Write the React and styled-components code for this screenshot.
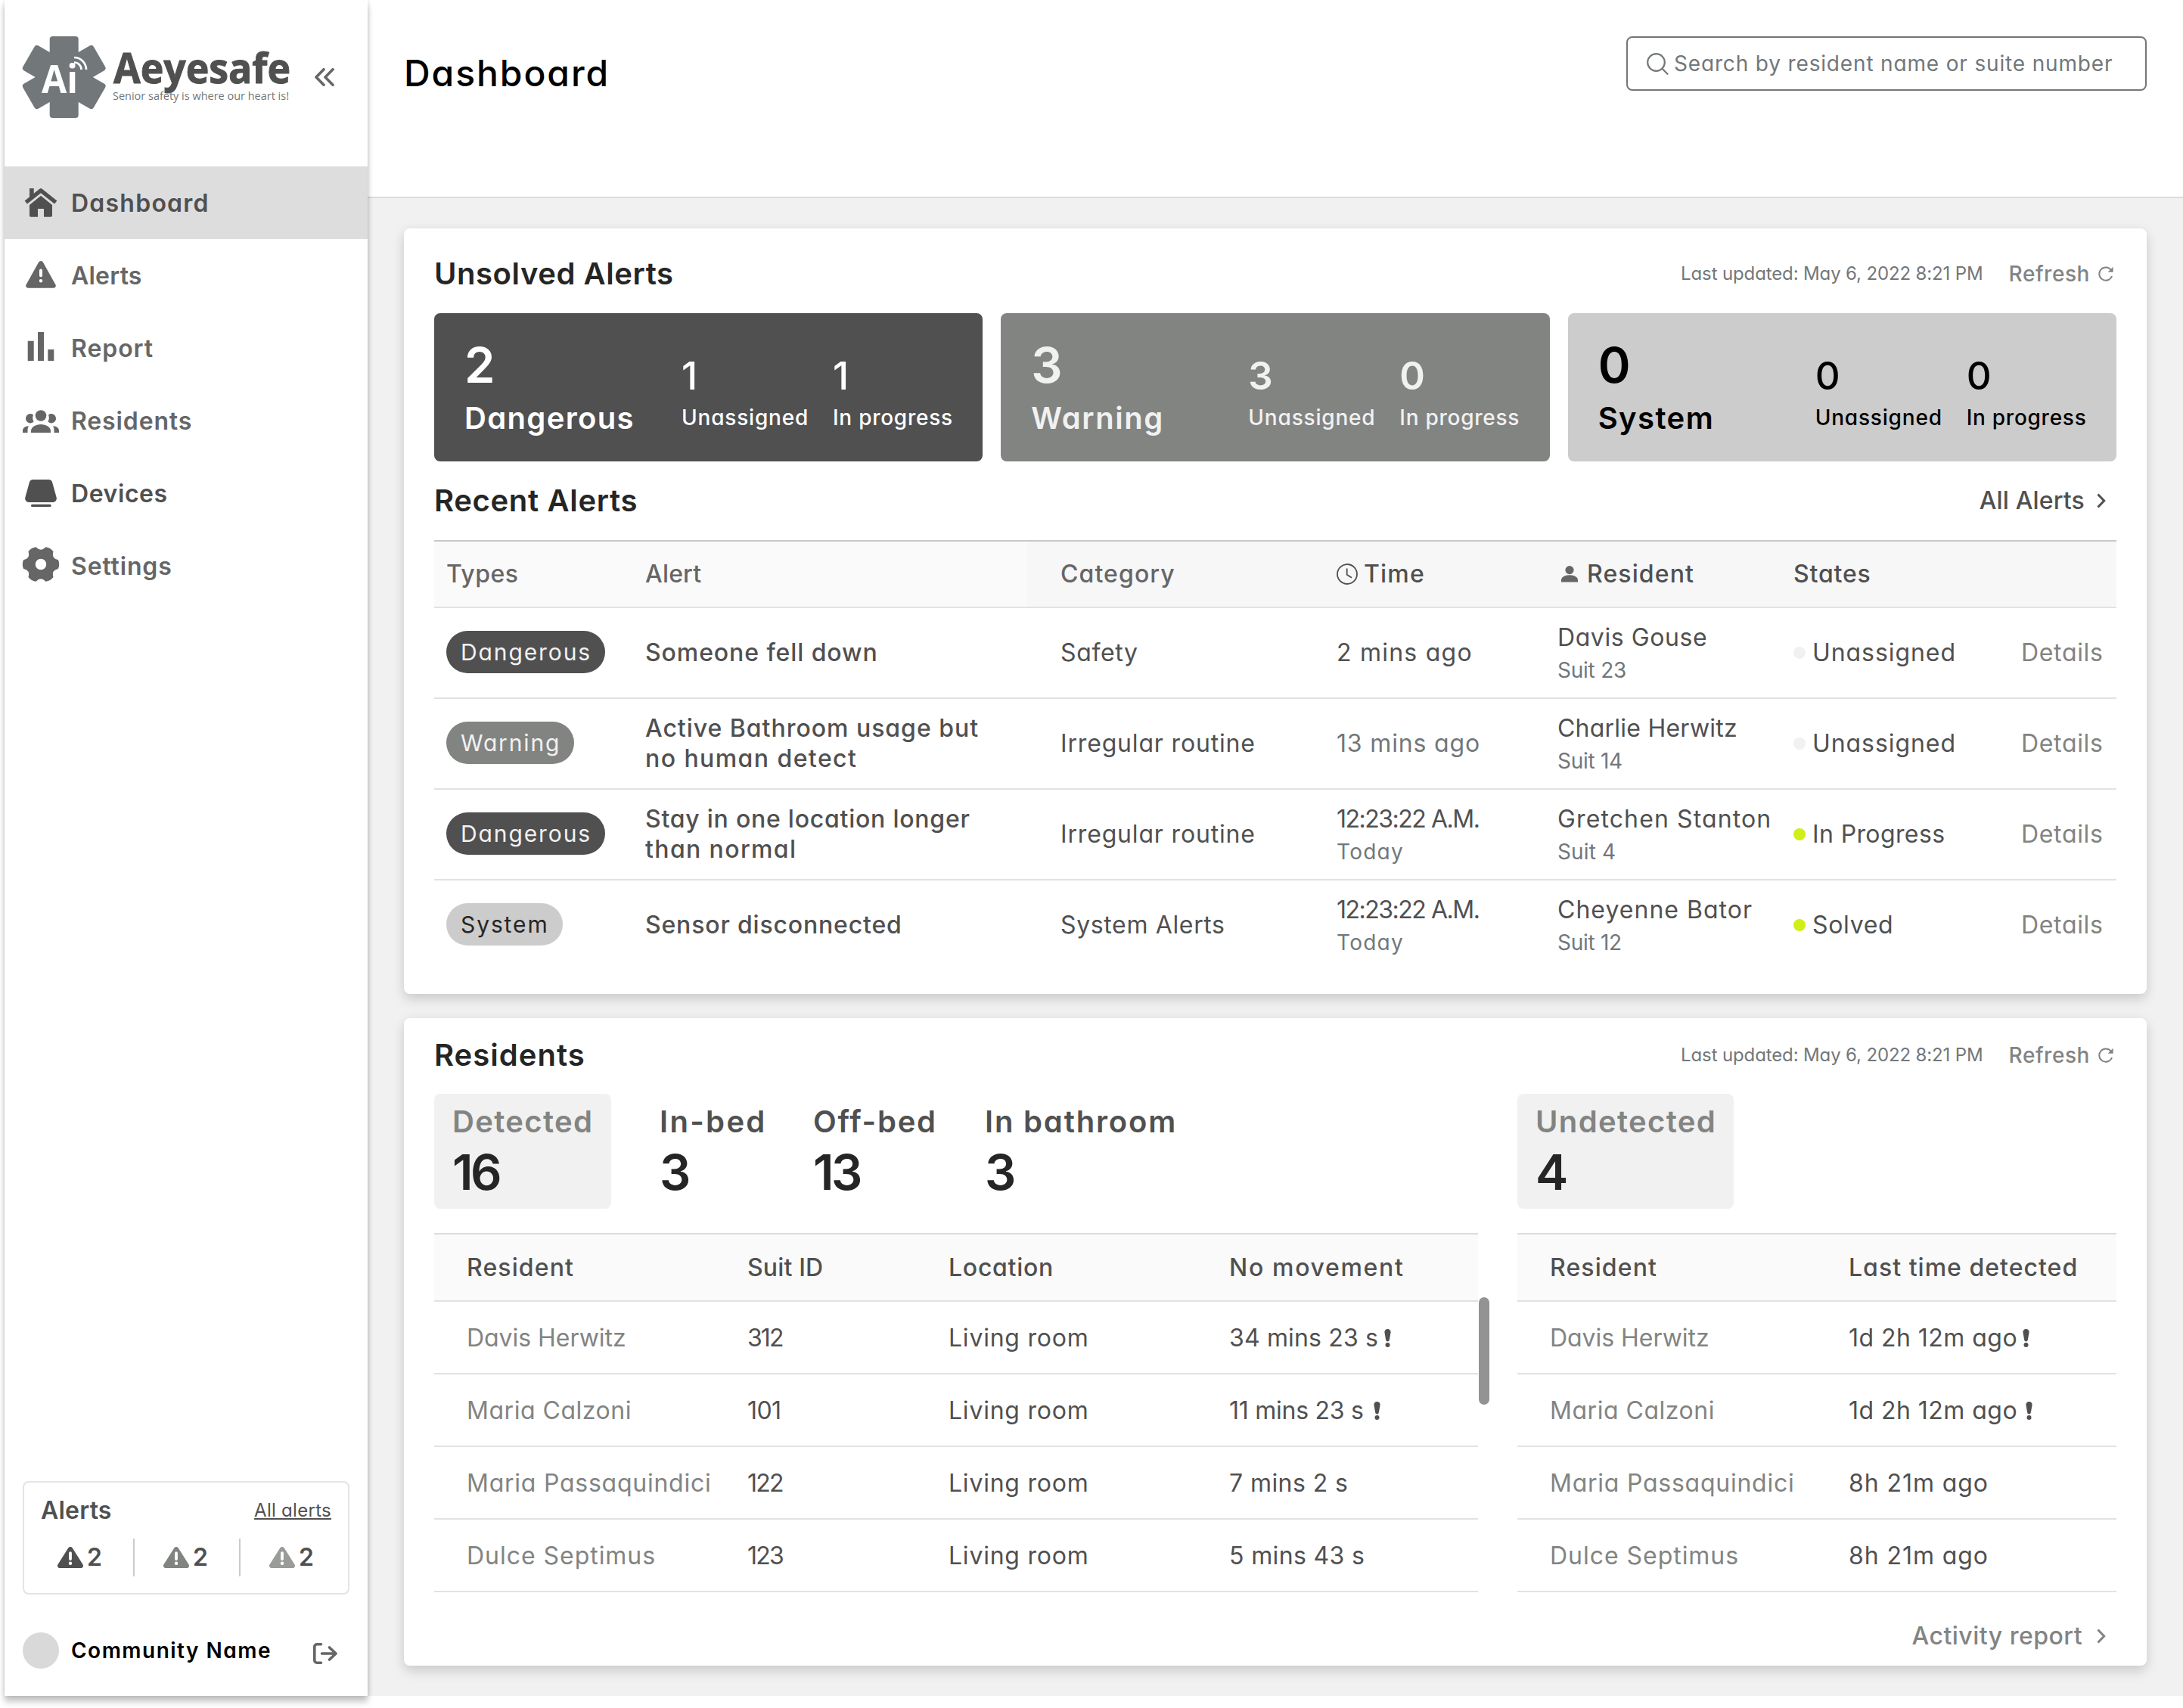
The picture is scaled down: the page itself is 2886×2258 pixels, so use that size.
import React from "react";
import styled, { createGlobalStyle } from "styled-components";

const colors = {
  ink: "#505050",
  heading: "#252525",
  nav: "#666666",
  slate: "#72777a",
  muted: "#828482",
  line: "#e2e2e2",
  panel: "#f1f1f1",
  lime: "#d1ee18",
};

// letter spacing (em) per font size, so every label keeps its drawn width
const tracking = {
  24: { "All alerts": 0.0117, "Last updated: May 6, 2022 8:21 PM": -0.0055 },
  28: {
    "Community Name": 0.0531,
    "Search by resident name or suite number": 0.03,
    Refresh: 0.0199,
    Unassigned: 0.0288,
    "In progress": 0.0263,
    Today: 0.0449,
    "Suit 23": -0.0085,
    "Suit 14": -0.0104,
    "Suit 4": 0.0046,
    "Suit 12": -0.0104,
  },
  30: { Dangerous: 0.063, Warning: 0.0617, System: 0.063 },
  32: {
    Dashboard: 0.0385,
    Alerts: 0.006,
    Report: 0.0295,
    Residents: 0.027,
    Devices: 0.018,
    Settings: 0.0265,
    "All Alerts": 0.005,
    Types: 0.014,
    Alert: 0.006,
    Category: 0.034,
    Time: 0.0378,
    Resident: 0.0347,
    States: 0.0257,
    "Someone fell down": 0.0284,
    "Active Bathroom usage but": 0.0305,
    "no human detect": 0.0446,
    "Stay in one location longer": 0.0238,
    "than normal": 0.0428,
    "Sensor disconnected": 0.0257,
    Safety: 0.02,
    "Irregular routine": 0.026,
    "System Alerts": 0.02,
    "2 mins ago": 0.0385,
    "13 mins ago": 0.0263,
    "12:23:22 A.M.": -0.0465,
    "Davis Gouse": 0.0183,
    "Charlie Herwitz": 0.0073,
    "Gretchen Stanton": 0.035,
    "Cheyenne Bator": 0.032,
    Unassigned: 0.0291,
    "In Progress": 0.012,
    Solved: 0.021,
    Details: 0.0208,
    "Suit ID": 0.0046,
    Location: 0.023,
    "No movement": 0.0523,
    "Last time detected": 0.032,
    "Davis Herwitz": -0.0014,
    "Maria Calzoni": 0.0165,
    "Maria Passaquindici": 0.0235,
    "Dulce Septimus": 0.0303,
    312: -0.0591,
    101: -0.0188,
    122: -0.055,
    123: -0.055,
    "Living room": 0.024,
    "34 mins 23 s": 0.0048,
    "11 mins 23 s": -0.0082,
    "7 mins 2 s": 0.0132,
    "5 mins 43 s": 0.011,
    "1d 2h 12m ago": 0.0145,
    "8h 21m ago": 0.029,
    "Activity report": 0.0148,
  },
  40: {
    "Unsolved Alerts": 0.0142,
    "Recent Alerts": 0.0167,
    Residents: 0.0254,
    Dangerous: 0.0335,
    Warning: 0.0399,
    System: 0.0355,
    Detected: 0.0335,
    Undetected: 0.034,
    "In-bed": 0.058,
    "Off-bed": 0.044,
    "In bathroom": 0.0455,
  },
  48: { Dashboard: 0.0405 },
  65: { 16: -0.055, 13: -0.055 },
};

const GlobalStyle = createGlobalStyle`
  * {
    box-sizing: border-box;
  }
  html, body {
    margin: 0;
    background: #ffffff;
  }
  body {
    font-family: Inter, "Open Sans", sans-serif;
    font-feature-settings: "cv11";
    color: ${colors.ink};
    overflow: hidden;
  }
`;

const TextBase = styled.span`
  display: block;
  white-space: nowrap;
  font-size: ${(p) => p.$size}px;
  font-weight: ${(p) => p.$weight};
  line-height: ${(p) => p.$lh || 40}px;
  letter-spacing: ${(p) => p.$ls}em;
  color: ${(p) => p.$color || "inherit"};
  text-decoration: ${(p) => (p.$underline ? "underline" : "none")};
  text-decoration-thickness: 2px;
  text-underline-offset: 2px;
`;

const Text = ({ size = 32, weight = 400, lh, color, underline, children }) => (
  <TextBase
    $size={size}
    $weight={weight}
    $lh={lh}
    $color={color}
    $underline={underline}
    $ls={(tracking[size] && tracking[size][children]) || 0}
  >
    {children}
  </TextBase>
);

/* ---------- layout ---------- */

const Page = styled.div`
  display: flex;
  width: 2886px;
  height: 2258px;
  padding-left: 6px;
`;

const Sidebar = styled.aside`
  position: relative;
  z-index: 1;
  display: flex;
  flex-direction: column;
  flex: none;
  width: 480px;
  height: 2242px;
  background: #ffffff;
  box-shadow: 0 8px 8px rgba(0, 0, 0, 0.22), 0 0 6px rgba(0, 0, 0, 0.14);
`;

const Main = styled.main`
  flex: 1;
  height: 2242px;
  background: ${colors.panel};
`;

const Header = styled.header`
  display: flex;
  justify-content: space-between;
  align-items: flex-start;
  height: 262px;
  padding: 48px 48px 0;
  background: #ffffff;
  border-bottom: 2px solid #dcdcdc;
`;

const SearchBox = styled.div`
  display: flex;
  align-items: center;
  gap: 7px;
  width: 688px;
  height: 72px;
  padding-left: 25px;
  border: 2px solid ${colors.slate};
  border-radius: 8px;
  color: ${colors.slate};
`;

const Cards = styled.div`
  display: flex;
  flex-direction: column;
  gap: 32px;
  padding: 40px 48px;
`;

const Card = styled.section`
  height: ${(p) => p.$height}px;
  padding: 0 40px;
  background: #ffffff;
  border-radius: 8px;
  box-shadow: 0 8px 16px rgba(0, 0, 0, 0.13), 0 0 16px rgba(0, 0, 0, 0.05);
`;

const SectionHead = styled.div`
  display: flex;
  align-items: center;
  justify-content: space-between;
  height: ${(p) => p.$height}px;
  padding: ${(p) => p.$top || 0}px ${(p) => p.$right || 0}px ${(p) => p.$bottom || 0}px 0;
`;

const Inline = styled.div`
  display: flex;
  align-items: center;
  gap: ${(p) => p.$gap}px;
  color: ${(p) => p.$color || "inherit"};
  margin-left: ${(p) => p.$left || 0}px;

  svg {
    flex: none;
    display: block;
  }
`;

/* ---------- sidebar parts ---------- */

const Brand = styled.div`
  display: flex;
  height: 220px;
  padding: 44px 0 0 24px;

  svg {
    display: block;
  }
`;

const Collapse = styled.div`
  padding-top: 46px;
  margin-left: -1px;
  color: ${colors.nav};
`;

const NavItem = styled.a`
  display: flex;
  align-items: center;
  gap: 16px;
  height: 96px;
  padding-left: 24px;
  color: ${(p) => (p.$dark ? colors.ink : colors.nav)};
  background: ${(p) => (p.$active ? "#dddddd" : "transparent")};

  span {
    padding-top: 2px;
  }
`;

const AlertBox = styled.div`
  width: 432px;
  height: 150px;
  margin: auto 0 50px 24px;
  padding: 17px 22px 0;
  border: 2px solid #e4e4e4;
  border-radius: 8px;
`;

const AlertCounts = styled.div`
  display: grid;
  grid-template-columns: repeat(3, 140px);
  margin: 17px 0 0 -16px;
`;

const AlertCount = styled.div`
  display: flex;
  align-items: center;
  gap: 5px;
  height: 50px;
  padding-left: 38px;
  border-right: ${(p) => (p.$last ? "none" : "2px solid #cccccc")};

  svg {
    display: block;
    color: ${(p) => p.$tone};
  }
`;

const Account = styled.div`
  display: flex;
  align-items: center;
  height: 48px;
  margin: 0 0 36px 24px;
  gap: 16px;

  svg {
    margin: 8px 40px 0 auto;
    color: ${colors.nav};
  }
`;

const Avatar = styled.div`
  width: 48px;
  height: 48px;
  border-radius: 50%;
  background: #d9d9d9;
`;

/* ---------- alert summary ---------- */

const Stats = styled.div`
  display: grid;
  grid-template-columns: repeat(3, 1fr);
  gap: 24px;
`;

const Stat = styled.div`
  display: grid;
  grid-template-columns: 287px 200px auto;
  height: 196px;
  padding: 32px 0 0 40px;
  border-radius: 8px;
  background: ${(p) => p.$bg};
  color: ${(p) => p.$fg};
`;

const SubStat = styled.div`
  padding-top: 18px;
`;

/* ---------- alerts table ---------- */

const AlertRow = styled.div`
  display: grid;
  grid-template-columns: 263px 549px 365px 292px 312px 301px auto;
  align-items: center;
  height: 120px;
  padding-left: 16px;
  border-bottom: ${(p) => (p.$last ? "2px solid transparent" : `2px solid ${colors.line}`)};
`;

const AlertHeadRow = styled(AlertRow)`
  height: 90px;
  border-top: 2px solid #c8c8c8;
  background: linear-gradient(to right, #fafafa 784px, #f7f7f7 784px);
`;

const Pill = styled.div`
  display: inline-flex;
  align-items: center;
  height: 56px;
  padding: 0 18px 0 19px;
  border-radius: 28px;
  background: ${(p) => p.$bg};
  color: ${(p) => p.$fg};
`;

const PillCell = styled.div`
  display: flex;
  padding-bottom: 2px;
`;

const Dot = styled.div`
  width: 16px;
  height: 16px;
  border-radius: 50%;
  background: ${(p) => p.$color};
`;

/* ---------- residents ---------- */

const Columns = styled.div`
  display: grid;
  grid-template-columns: 1380px 792px;
  column-gap: 52px;
`;

const Tallies = styled.div`
  display: grid;
  grid-template-columns: 274px 203px 227px auto;
  height: 184px;
  align-items: start;
`;

const Tally = styled.div`
  width: ${(p) => (p.$width ? `${p.$width}px` : "auto")};
  height: 152px;
  padding: 1px 0 0 24px;
  border-radius: 8px;
  background: ${(p) => (p.$width ? colors.panel : "transparent")};
`;

const TableWrap = styled.div`
  position: relative;
`;

const ResidentRow = styled.div`
  display: grid;
  grid-template-columns: ${(p) => p.$cols};
  align-items: center;
  height: 96px;
  padding: 2px 0 0 43px;
  border-bottom: 2px solid ${colors.line};
`;

const ResidentHeadRow = styled(ResidentRow)`
  height: 91px;
  padding-top: 1px;
  border-top: 2px solid #dcdcdc;
  background: #fafafa;
`;

const ScrollThumb = styled.div`
  position: absolute;
  top: 85px;
  left: 1381px;
  width: 14px;
  height: 142px;
  border-radius: 7px;
  background: #929392;
`;

const Footer = styled.div`
  display: flex;
  justify-content: flex-end;
  padding: 38px 14px 0 0;
`;

/* ---------- icons ---------- */

const Icon = ({ children, size = 48, ...rest }) => (
  <svg width={size} height={size} viewBox={`0 0 ${size} ${size}`} fill="currentColor" {...rest}>
    {children}
  </svg>
);

const HomeIcon = () => (
  <Icon>
    <path d="M9 5h5.700v9L9 18.500z" />
    <path d="M4.300 23.500 24 7.800l19.700 15.700" fill="none" stroke="currentColor" strokeWidth="5.400" strokeLinejoin="round" />
    <path d="M24 14.800 39 27v14a1.700 1.700 0 0 1-1.700 1.700H28V32h-8v10.700h-9.300A1.700 1.700 0 0 1 9 41V27z" />
  </Icon>
);

const WarnIcon = () => (
  <Icon>
    <path
      fillRule="evenodd"
      d="M21.200 6.600a3.300 3.300 0 0 1 5.600 0l16.600 29.600a3 3 0 0 1-2.700 4.600H7.300a3 3 0 0 1-2.700-4.600zM22 17.500v6.700a2 2 0 0 0 4 0v-6.700a2 2 0 0 0-4 0zM24 29a2.200 2.200 0 1 0 0 4.400 2.200 2.200 0 0 0 0-4.400z"
    />
  </Icon>
);

const ReportIcon = () => (
  <Icon>
    <path d="M6.700 14.700h8V41h-8zM20 3h8v38h-8zM33.300 26h8v15h-8z" />
  </Icon>
);

const PeopleIcon = () => (
  <Icon>
    <circle cx="24" cy="17.500" r="7.300" />
    <path d="M11 40v-2c0-5.500 6-9 13-9s13 3.500 13 9v2z" />
    <path d="M14 16.400a6.200 6.200 0 1 0 .6 9.200 11 11 0 0 1-.6-9.200zM34 16.400a6.200 6.200 0 1 1-.6 9.200 11 11 0 0 0 .6-9.200z" />
    <path d="M0 40v-2.500c0-3.600 3.200-6 8-6.200-1 1.600-1.500 3.500-1.500 5.600V40zM48 40v-2.500c0-3.600-3.200-6-8-6.200 1 1.600 1.500 3.500 1.500 5.600V40z" />
  </Icon>
);

const DeviceIcon = () => (
  <Icon>
    <path d="M14 6h20a5.500 5.500 0 0 1 5.300 4.200l5.400 19.500A5 5 0 0 1 40 36H8a5 5 0 0 1-4.700-6.300L8.700 10.200A5.500 5.500 0 0 1 14 6z" />
    <rect x="11" y="38.700" width="26.700" height="3.300" rx="1.600" />
  </Icon>
);

const polar = (r, deg) => {
  const a = (deg * Math.PI) / 180;
  return `${(24 + r * Math.cos(a)).toFixed(2)} ${(22 + r * Math.sin(a)).toFixed(2)}`;
};

const gear = [0, 60, 120, 180, 240, 300]
  .map((d, i) => `${i ? "L" : "M"}${polar(23, d - 13)}Q${polar(24.5, d)} ${polar(23, d + 13)}Q${polar(15, d + 30)} ${polar(23, d + 47)}`)
  .join("");

const GearIcon = () => (
  <Icon overflow="visible">
    <path
      fillRule="evenodd"
      stroke="currentColor"
      strokeWidth="1.500"
      strokeLinejoin="round"
      d={`${gear}Z M32 22a8 8 0 1 0-16 0 8 8 0 0 0 16 0z`}
    />
  </Icon>
);

const SmallWarnIcon = () => (
  <svg width="34" height="28" viewBox="0 0 34 28" fill="currentColor">
    <path
      fillRule="evenodd"
      d="M14.200 1.600a3.200 3.200 0 0 1 5.600 0l13.700 21.600a3.100 3.100 0 0 1-2.700 4.800H3.200A3.100 3.100 0 0 1 .5 23.200zM15.100 8.100v8a1.900 1.900 0 0 0 3.800 0v-8a1.900 1.900 0 0 0-3.800 0zM17 19.600a2.200 2.200 0 1 0 0 4.400 2.200 2.200 0 0 0 0-4.400z"
    />
  </svg>
);

const LogoutIcon = () => (
  <svg width="32" height="28" viewBox="0 0 32 28" fill="none" stroke="currentColor" strokeWidth="3.600" strokeLinecap="round" strokeLinejoin="round">
    <path d="M10.500 1.800H5A3.200 3.200 0 0 0 1.800 5v18A3.200 3.200 0 0 0 5 26.200h5.500" />
    <path d="M11.500 14H29M21.500 6l8.500 8-8.500 8" />
  </svg>
);

const CollapseIcon = () => (
  <svg width="26" height="24" viewBox="0 0 26 24" fill="none" stroke="currentColor" strokeWidth="3.600" strokeLinecap="round" strokeLinejoin="round">
    <path d="M12 1.800 2 12l10 10.200M24 1.800 14 12l10 10.200" />
  </svg>
);

const SearchIcon = () => (
  <svg width="29" height="29" viewBox="0 0 29 29" fill="none" stroke="currentColor" strokeWidth="2.200" strokeLinecap="round">
    <circle cx="12.500" cy="12.500" r="11.300" />
    <path d="m20.500 20.800 7 7" />
  </svg>
);

const RefreshIcon = () => (
  <svg width="20" height="20" viewBox="0 0 20 20" fill="none" stroke="currentColor" strokeWidth="2">
    <path d="M16.800 5A8.600 8.600 0 1 0 18 13" />
    <path d="M19.600.8v7h-7z" fill="currentColor" stroke="none" />
  </svg>
);

const ChevronIcon = () => (
  <svg width="12" height="20" viewBox="0 0 12 20" fill="none" stroke="currentColor" strokeWidth="3">
    <path d="m1.500 1.500 8.200 8.500-8.200 8.500" />
  </svg>
);

const ClockIcon = () => (
  <svg width="28" height="28" viewBox="0 0 28 28" fill="none" stroke="currentColor" strokeWidth="1.800">
    <circle cx="14" cy="14" r="13" />
    <path d="M13.700 6.500v8.300l6.300 4" />
  </svg>
);

const PersonIcon = () => (
  <svg width="28" height="28" viewBox="0 0 28 28" fill={colors.nav}>
    <circle cx="14" cy="8.600" r="5.600" />
    <path d="M3 24.500v-2.300c0-4.500 4.500-7 11-7s11 2.500 11 7v2.300z" />
  </svg>
);

const BangIcon = () => (
  <svg width="9" height="24" viewBox="0 0 9 24" fill={colors.ink}>
    <path d="M4.500 0A4 4 0 0 1 8.600 4.300L6.900 14a2.400 2.400 0 0 1-4.800 0L.4 4.300A4 4 0 0 1 4.500 0z" />
    <circle cx="4.500" cy="21" r="3" />
  </svg>
);

const Logo = () => (
  <svg width="387" height="120" viewBox="30 44 387 120" overflow="visible">
    <g fill={colors.slate}>
      {[0, 60, 120].map((deg) => (
        <rect key={deg} x="65.700" y="48" width="38" height="108" rx="4" transform={`rotate(${deg} 84.700 102)`} />
      ))}
    </g>
    <text x="55" y="122.700" fill="#ffffff" fontFamily="Open Sans" fontWeight="700" fontSize="52" textLength="48" lengthAdjust="spacingAndGlyphs">
      Ai
    </text>
    <g fill="none" stroke="#ffffff" strokeWidth="2.700">
      <path d="M98 82.500a9.500 9.500 0 0 1 9.500 9.500" />
      <path d="M98 76a16 16 0 0 1 16 16" />
    </g>
    <text
      x="150"
      y="109.500"
      fill={colors.ink}
      stroke={colors.ink}
      strokeWidth="1"
      fontFamily="Open Sans"
      fontWeight="700"
      fontSize="56"
      textLength="234"
      lengthAdjust="spacingAndGlyphs"
    >
      Aeyesafe
    </text>
    <text x="149" y="132" fill={colors.slate} fontFamily="Open Sans" fontSize="15" textLength="233" lengthAdjust="spacingAndGlyphs">
      Senior safety is where our heart is!
    </text>
  </svg>
);

/* ---------- data ---------- */

const nav = [
  { label: "Dashboard", icon: <HomeIcon />, active: true, dark: true },
  { label: "Alerts", icon: <WarnIcon /> },
  { label: "Report", icon: <ReportIcon /> },
  { label: "Residents", icon: <PeopleIcon /> },
  { label: "Devices", icon: <DeviceIcon />, dark: true },
  { label: "Settings", icon: <GearIcon /> },
];

const kinds = {
  Dangerous: { bg: "#505050", fg: "#ffffff", pillFg: "#f1f1f1" },
  Warning: { bg: "#828482", fg: "#f1f1f1", pillFg: "#f1f1f1" },
  System: { bg: "#cccccc", fg: "#000000", pillFg: "#252525" },
};

const stats = [
  { kind: "Dangerous", total: 2, unassigned: 1, progress: 1, weight: 500 },
  { kind: "Warning", total: 3, unassigned: 3, progress: 0, weight: 600 },
  { kind: "System", total: 0, unassigned: 0, progress: 0, weight: 500 },
];

const alerts = [
  { kind: "Dangerous", alert: ["Someone fell down"], category: "Safety", time: "2 mins ago", name: "Davis Gouse", suit: "Suit 23", state: "Unassigned" },
  { kind: "Warning", alert: ["Active Bathroom usage but", "no human detect"], category: "Irregular routine", time: "13 mins ago", timeColor: colors.slate, name: "Charlie Herwitz", suit: "Suit 14", state: "Unassigned" },
  { kind: "Dangerous", alert: ["Stay in one location longer", "than normal"], category: "Irregular routine", time: "12:23:22 A.M.", day: "Today", name: "Gretchen Stanton", suit: "Suit 4", state: "In Progress", on: true },
  { kind: "System", alert: ["Sensor disconnected"], category: "System Alerts", time: "12:23:22 A.M.", day: "Today", name: "Cheyenne Bator", suit: "Suit 12", state: "Solved", on: true },
];

const detected = [
  { name: "Davis Herwitz", suit: "312", idle: "34 mins 23 s", bang: 8 },
  { name: "Maria Calzoni", suit: "101", idle: "11 mins 23 s", bang: 13 },
  { name: "Maria Passaquindici", suit: "122", idle: "7 mins 2 s" },
  { name: "Dulce Septimus", suit: "123", idle: "5 mins 43 s" },
];

const undetected = [
  { name: "Davis Herwitz", last: "1d 2h 12m ago", bang: 7 },
  { name: "Maria Calzoni", last: "1d 2h 12m ago", bang: 11 },
  { name: "Maria Passaquindici", last: "8h 21m ago" },
  { name: "Dulce Septimus", last: "8h 21m ago" },
];

/* ---------- sections ---------- */

const Updated = () => (
  <Inline $gap={34}>
    <Text size={24} color={colors.slate}>Last updated: May 6, 2022 8:21 PM</Text>
    <Inline $gap={11} $color={colors.muted}>
      <Text size={28} weight={500}>Refresh</Text>
      <RefreshIcon />
    </Inline>
  </Inline>
);

const TallyItem = ({ label, value, width, muted }) => (
  <Tally $width={width}>
    <Text size={40} weight={600} lh={72} color={muted ? colors.muted : colors.ink}>{label}</Text>
    <Text size={65} weight={600} lh={62} color={colors.heading}>{value}</Text>
  </Tally>
);

const SideNav = () => (
  <Sidebar>
    <Brand>
      <Logo />
      <Collapse>
        <CollapseIcon />
      </Collapse>
    </Brand>
    {nav.map((item) => (
      <NavItem key={item.label} $active={item.active} $dark={item.dark}>
        {item.icon}
        <Text weight={600}>{item.label}</Text>
      </NavItem>
    ))}
    <AlertBox>
      <SectionHead $height={40}>
        <Text weight={600}>Alerts</Text>
        <Text size={24} underline>All alerts</Text>
      </SectionHead>
      <AlertCounts>
        {["#505050", "#828482", "#9a9c9a"].map((tone, i) => (
          <AlertCount key={tone} $tone={tone} $last={i === 2}>
            <SmallWarnIcon />
            <Text weight={600}>2</Text>
          </AlertCount>
        ))}
      </AlertCounts>
    </AlertBox>
    <Account>
      <Avatar />
      <Text size={28} weight={600} color="#000000">Community Name</Text>
      <LogoutIcon />
    </Account>
  </Sidebar>
);

const AlertsCard = () => (
  <Card $height={1012}>
    <SectionHead $height={112} $top={8} $right={4}>
      <Text size={40} weight={600} color={colors.heading}>Unsolved Alerts</Text>
      <Updated />
    </SectionHead>
    <Stats>
      {stats.map((s) => (
        <Stat key={s.kind} $bg={kinds[s.kind].bg} $fg={kinds[s.kind].fg}>
          <div>
            <Text size={65} weight={600} lh={73}>{s.total}</Text>
            <Text size={40} weight={600} lh={67}>{s.kind}</Text>
          </div>
          <SubStat>
            <Text size={51} weight={s.weight} lh={65}>{s.unassigned}</Text>
            <Text size={28} weight={500} lh={46}>Unassigned</Text>
          </SubStat>
          <SubStat>
            <Text size={51} weight={s.weight} lh={65}>{s.progress}</Text>
            <Text size={28} weight={500} lh={46}>In progress</Text>
          </SubStat>
        </Stat>
      ))}
    </Stats>
    <SectionHead $height={104} $right={14}>
      <Text size={40} weight={600} color={colors.heading}>Recent Alerts</Text>
      <Inline $gap={16}>
        <Text weight={500}>All Alerts</Text>
        <ChevronIcon />
      </Inline>
    </SectionHead>
    <AlertHeadRow>
      <Text weight={500} color={colors.nav}>Types</Text>
      <Text weight={500} color={colors.nav}>Alert</Text>
      <Text weight={500} color={colors.nav}>Category</Text>
      <Inline $gap={8}>
        <ClockIcon />
        <Text weight={500}>Time</Text>
      </Inline>
      <Inline $gap={9} $left={2}>
        <PersonIcon />
        <Text weight={500}>Resident</Text>
      </Inline>
      <Text weight={500}>States</Text>
    </AlertHeadRow>
    {alerts.map((a, i) => (
      <AlertRow key={a.name} $last={i === alerts.length - 1}>
        <PillCell>
          <Pill $bg={kinds[a.kind].bg} $fg={kinds[a.kind].pillFg}>
            <Text size={30}>{a.kind}</Text>
          </Pill>
        </PillCell>
        <div>
          {a.alert.map((line) => (
            <Text key={line} weight={500}>{line}</Text>
          ))}
        </div>
        <Text>{a.category}</Text>
        <div>
          <Text lh={46} color={a.timeColor}>{a.time}</Text>
          {a.day && <Text size={28} color={colors.slate}>{a.day}</Text>}
        </div>
        <div>
          <Text lh={46}>{a.name}</Text>
          <Text size={28} color={colors.slate}>{a.suit}</Text>
        </div>
        <Inline $gap={9}>
          <Dot $color={a.on ? colors.lime : colors.panel} />
          <Text>{a.state}</Text>
        </Inline>
        <Text color={colors.muted}>Details</Text>
      </AlertRow>
    ))}
  </Card>
);

const ResidentsCard = () => (
  <Card $height={856}>
    <SectionHead $height={100} $right={4} $bottom={2}>
      <Text size={40} weight={600} color={colors.heading}>Residents</Text>
      <Updated />
    </SectionHead>
    <Columns>
      <Tallies>
        <TallyItem label="Detected" value="16" width={234} muted />
        <TallyItem label="In-bed" value="3" />
        <TallyItem label="Off-bed" value="13" />
        <TallyItem label="In bathroom" value="3" />
      </Tallies>
      <TallyItem label="Undetected" value="4" width={286} muted />
      <TableWrap>
        <ResidentHeadRow $cols="371px 266px 371px auto">
          <Text weight={500}>Resident</Text>
          <Text weight={500}>Suit ID</Text>
          <Text weight={500}>Location</Text>
          <Text weight={500}>No movement</Text>
        </ResidentHeadRow>
        {detected.map((r) => (
          <ResidentRow key={r.name} $cols="371px 266px 371px auto">
            <Text color={colors.muted}>{r.name}</Text>
            <Text>{r.suit}</Text>
            <Text>Living room</Text>
            <Inline $gap={r.bang}>
              <Text>{r.idle}</Text>
              {r.bang && <BangIcon />}
            </Inline>
          </ResidentRow>
        ))}
        <ScrollThumb />
      </TableWrap>
      <div>
        <ResidentHeadRow $cols="395px auto">
          <Text weight={500}>Resident</Text>
          <Text weight={500}>Last time detected</Text>
        </ResidentHeadRow>
        {undetected.map((r) => (
          <ResidentRow key={r.name} $cols="395px auto">
            <Text color={colors.muted}>{r.name}</Text>
            <Inline $gap={r.bang}>
              <Text>{r.last}</Text>
              {r.bang && <BangIcon />}
            </Inline>
          </ResidentRow>
        ))}
      </div>
    </Columns>
    <Footer>
      <Inline $gap={19} $color={colors.muted}>
        <Text weight={500}>Activity report</Text>
        <ChevronIcon />
      </Inline>
    </Footer>
  </Card>
);

export default function App() {
  return (
    <>
      <GlobalStyle />
      <Page>
        <SideNav />
        <Main>
          <Header>
            <Text size={48} weight={500} lh={98} color="#000000">Dashboard</Text>
            <SearchBox>
              <SearchIcon />
              <Text size={28}>Search by resident name or suite number</Text>
            </SearchBox>
          </Header>
          <Cards>
            <AlertsCard />
            <ResidentsCard />
          </Cards>
        </Main>
      </Page>
    </>
  );
}
